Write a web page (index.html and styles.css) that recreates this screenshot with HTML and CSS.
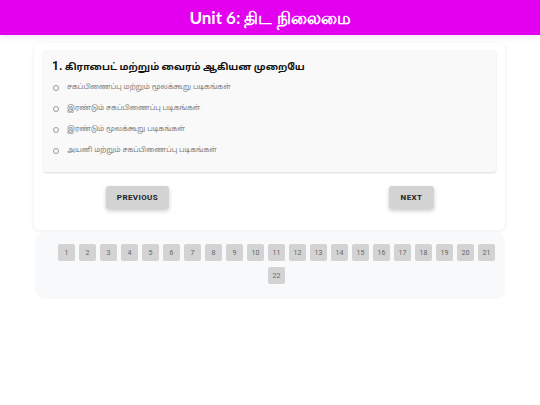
FILE: index.html
```html
<!DOCTYPE html>
<html lang="ta">
<head>
<meta charset="utf-8">
<link rel="stylesheet" href="styles.css">
</head>
<body>
<header class="topbar"><h1 class="title">Unit 6: திட நிலைமை</h1></header>
<main class="wrap">
  <section class="card">
    <div class="qbox">
      <h2 class="question"><span class="qnum">1.</span> கிராபைட் மற்றும் வைரம் ஆகியன முறையே</h2>
      <ul class="options">
        <li class="option"><span class="radio"></span>சகப்பிணைப்பு மற்றும் மூலக்கூறு படிகங்கள்</li>
        <li class="option"><span class="radio"></span>இரண்டும் சகப்பிணைப்பு படிகங்கள்</li>
        <li class="option"><span class="radio"></span>இரண்டும் மூலக்கூறு படிகங்கள்</li>
        <li class="option"><span class="radio"></span>அயனி மற்றும் சகப்பிணைப்பு படிகங்கள்</li>
      </ul>
    </div>
    <div class="nav">
      <button class="btn btn-prev">PREVIOUS</button>
      <button class="btn btn-next">NEXT</button>
    </div>
  </section>
  <section class="pager">
    <div class="pages">
      <span class="pg">1</span><span class="pg">2</span><span class="pg">3</span><span class="pg">4</span><span class="pg">5</span><span class="pg">6</span><span class="pg">7</span><span class="pg">8</span><span class="pg">9</span><span class="pg">10</span><span class="pg">11</span><span class="pg">12</span><span class="pg">13</span><span class="pg">14</span><span class="pg">15</span><span class="pg">16</span><span class="pg">17</span><span class="pg">18</span><span class="pg">19</span><span class="pg">20</span><span class="pg">21</span><span class="pg">22</span>
    </div>
  </section>
</main>
</body>
</html>
```
FILE: styles.css
```css
* { box-sizing: border-box; }
html, body { margin: 0; padding: 0; background: #ffffff; }
body { font-family: Roboto, "Noto Sans", sans-serif; }

.topbar {
  height: 35px;
  background: #e200ef;
  display: flex;
  align-items: center;
  justify-content: center;
  box-shadow: 0 2px 6px rgba(150, 120, 200, 0.18);
}
.title {
  margin: 0;
  color: #ffffff;
  font-family: Lato, "Noto Sans", sans-serif;
  font-weight: 700;
  font-size: 17px;
  line-height: 1;
}

.wrap {
  padding: 8px 35px 0 34px;
}

.card {
  background: #ffffff;
  border-radius: 6px;
  box-shadow: 0 1px 4px rgba(0, 0, 0, 0.08);
  padding: 7px 9px 21px 9px;
}

.qbox {
  background: #f9f9f9;
  border-radius: 3px;
  box-shadow: 0 1px 2px rgba(0, 0, 0, 0.14);
  padding: 8px 9px 10px 9px;
  height: 122px;
}
.question {
  margin: 0 0 1px 0;
  font-size: 9.6px;
  font-weight: 700;
  color: #111111;
  line-height: 16px;
  font-family: "Noto Sans Tamil", "Noto Sans", Roboto, sans-serif;
}
.qnum {
  font-family: Roboto, "Noto Sans", sans-serif;
  font-size: 12px;
}
.options {
  list-style: none;
  margin: 0;
  padding: 0;
}
.option {
  display: flex;
  align-items: center;
  height: 21px;
  font-family: "Noto Sans Tamil", "Noto Sans", sans-serif;
  font-size: 7.1px;
  color: #7c7c7c;
}
.radio {
  width: 6px;
  height: 6px;
  border: 1px solid #9a9a9a;
  border-radius: 50%;
  margin: 0 8px 0 1px;
}

.nav {
  display: flex;
  justify-content: space-between;
  padding: 14px 62px 0 63px;
}
.btn {
  height: 23px;
  border: none;
  border-radius: 3px;
  background: #d3d3d3;
  color: #222222;
  font-family: Roboto, sans-serif;
  font-weight: 700;
  font-size: 8px;
  letter-spacing: 0.4px;
  box-shadow: 0 2px 4px rgba(0, 0, 0, 0.2);
  padding: 0;
}
.btn-prev { width: 63px; }
.btn-next { width: 45px; }

.pager {
  margin-top: 2px;
  margin-left: 1px;
  background: #f8f9fa;
  border-radius: 9px;
  padding: 12px 4px 15px 17px;
}
.pages {
  display: flex;
  flex-wrap: wrap;
  justify-content: center;
  gap: 6px 4px;
}
.pg {
  width: 17px;
  height: 17px;
  background: #d3d3d3;
  border-radius: 2px;
  color: #666666;
  font-size: 7px;
  display: flex;
  align-items: center;
  justify-content: center;
}
```
